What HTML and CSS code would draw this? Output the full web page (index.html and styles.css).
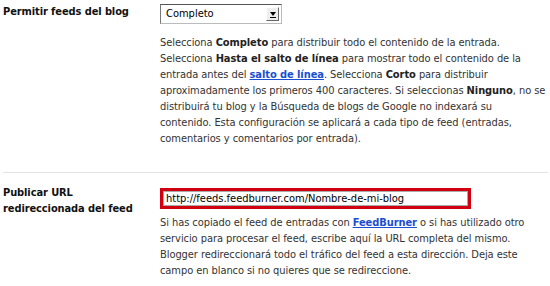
FILE: index.html
```html
<!DOCTYPE html>
<html lang="es">
<head>
  <meta charset="UTF-8">
  <title>Configuración de feeds</title>
  <link rel="stylesheet" href="styles.css">
</head>
<body>
  <div class="row first">
    <div class="label">Permitir feeds del blog</div>
    <div class="field">
      <div class="select">
        <span class="select-text">Completo</span>
        <span class="select-arrow"><span class="tri"></span></span>
      </div>
      <p class="help">
        Selecciona <b>Completo</b> para distribuir todo el contenido de la entrada.<br>
        Selecciona <b>Hasta el salto de línea</b> para mostrar todo el contenido de la<br>
        entrada antes del <a href="#">salto de línea</a>. Selecciona <b>Corto</b> para distribuir<br>
        aproximadamente los primeros 400 caracteres. Si seleccionas <b>Ninguno</b>, no se<br>
        distribuirá tu blog y la Búsqueda de blogs de Google no indexará su<br>
        contenido. Esta configuración se aplicará a cada tipo de feed (entradas,<br>
        comentarios y comentarios por entrada).
      </p>
    </div>
  </div>

  <div class="row second">
    <div class="label">Publicar URL<br>redireccionada del feed</div>
    <div class="field">
      <div class="url-box">
        <input type="text" class="url" value="http://feeds.feedburner.com/Nombre-de-mi-blog">
      </div>
      <p class="help">
        Si has copiado el feed de entradas con <a href="#">FeedBurner</a> o si has utilizado otro<br>
        servicio para procesar el feed, escribe aquí la URL completa del mismo.<br>
        Blogger redireccionará todo el tráfico del feed a esta dirección. Deja este<br>
        campo en blanco si no quieres que se redireccione.
      </p>
    </div>
  </div>
</body>
</html>
```

FILE: styles.css
```css
body {
  margin: 0;
  background: #fff;
  font-family: "DejaVu Sans Condensed", "DejaVu Sans", sans-serif;
  font-size: 11px;
  color: #333;
  width: 550px;
  overflow: hidden;
}
.row {
  display: grid;
  grid-template-columns: 157px 393px;
  padding-left: 3px;
}
.first {
  padding-top: 4px;
  padding-bottom: 25px;
  border-bottom: 1px solid #e4e4e4;
  margin: 0 2px 0 3px;
  padding-left: 0;
}
.second {
  padding-top: 15px;
}
.label {
  font-weight: bold;
  color: #111;
  font-size: 11px;
  line-height: 16px;
  letter-spacing: -0.1px;
}
.second .label {
  margin-top: -3px;
}
.help {
  margin: 0;
  line-height: 16px;
  white-space: nowrap;
  letter-spacing: -0.07px;
}
.help b {
  color: #222;
}
.help a {
  color: #1a4fd0;
  font-weight: bold;
}
.select {
  display: flex;
  width: 120px;
  height: 18px;
  border: 1px solid #777;
  border-top-color: #555;
  border-right-color: #bbb;
  border-bottom-color: #bbb;
  background: #fff;
  margin-bottom: 11px;
  color: #000;
}
.select-text {
  flex: 1;
  padding-left: 5px;
  line-height: 18px;
}
.select-arrow {
  width: 11px;
  margin: 2px 2px 2px 0;
  background: #eee;
  border: 1px solid #fff;
  border-right-color: #666;
  border-bottom-color: #666;
  display: flex;
  justify-content: center;
  align-items: center;
}
.tri {
  width: 0;
  height: 0;
  border-left: 3px solid transparent;
  border-right: 3px solid transparent;
  border-top: 4px solid #000;
}
.tri::after {
  content: "";
  display: block;
  width: 6px;
  height: 1px;
  background: #000;
  margin: 1px 0 0 -3px;
}
.url-box {
  width: 305px;
  border: 3px solid #d00010;
  margin-bottom: 6px;
}
.url {
  display: block;
  box-sizing: border-box;
  width: 100%;
  height: 15px;
  border: 1px solid #aaa;
  padding: 0 2px;
  font-family: inherit;
  font-size: 11px;
  color: #000;
}
```
